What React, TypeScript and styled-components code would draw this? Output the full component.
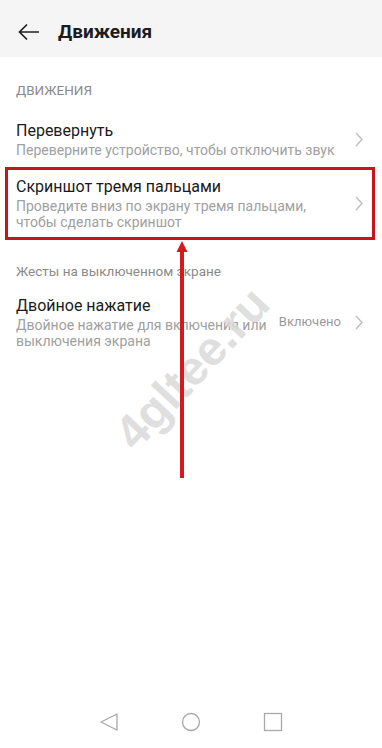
import React from 'react'
import styled, { createGlobalStyle } from 'styled-components'

const GlobalStyle = createGlobalStyle`
  html, body {
    margin: 0;
    padding: 0;
    background: #ffffff;
  }
  body {
    font-family: Roboto, "Noto Sans", "Liberation Sans", sans-serif;
    -webkit-font-smoothing: antialiased;
  }
`

const Screen = styled.div`
  position: relative;
  width: 382px;
  height: 748px;
  display: flex;
  flex-direction: column;
  background: #ffffff;
  overflow: hidden;
`

const Header = styled.header`
  height: 57px;
  display: flex;
  align-items: center;
  padding-left: 17px;
  background: #f5f5f5;
  flex-shrink: 0;
`

const BackButton = styled.button`
  width: 24px;
  height: 24px;
  padding: 0;
  border: 0;
  background: none;
  display: flex;
  align-items: center;
  justify-content: center;
  margin-right: 17px;
  margin-top: 6px;
  color: #222;
`

const Title = styled.h1`
  margin: 0;
  font-size: 19px;
  font-weight: 700;
  color: #1c1c1c;
  margin-top: 6px;
`

const Content = styled.main`
  flex: 1;
`

const SectionLabel = styled.div<{ $top: number; $bottom: number; $caps?: boolean }>`
  padding: ${({ $top, $bottom }) => `${$top}px 16px ${$bottom}px`};
  font-size: 13.5px;
  line-height: 20px;
  color: #8a8a8a;
  text-transform: ${({ $caps }) => ($caps ? 'uppercase' : 'none')};
`

const Row = styled.div<{ $highlight?: boolean }>`
  position: relative;
  display: flex;
  align-items: center;
  padding: ${({ $highlight }) => ($highlight ? '9px 16px 9px' : '7px 16px 8px')};

  ${({ $highlight }) =>
    $highlight &&
    `
    &::after {
      content: '';
      position: absolute;
      top: 0;
      bottom: 0;
      left: 5px;
      right: 7px;
      border: 3.5px solid #c9141c;
      pointer-events: none;
    }
  `}
`

const RowText = styled.div`
  flex: 1;
  min-width: 0;
`

const RowTitle = styled.div`
  font-size: 16px;
  line-height: 22px;
  color: #1a1a1a;
`

const RowSubtitle = styled.div<{ $width?: number }>`
  font-size: 14px;
  line-height: 16.5px;
  color: #a0a0a0;
  max-width: ${({ $width }) => ($width ? `${$width}px` : 'none')};
`

const RowValue = styled.div`
  font-size: 13px;
  color: #9a9a9a;
  margin-right: 14px;
  margin-top: -2px;
`

const Chevron = styled.svg`
  flex-shrink: 0;
  margin-right: 3px;
`

const NavBar = styled.nav`
  height: 48px;
  display: flex;
  align-items: center;
  justify-content: center;
  gap: 60px;
  padding-bottom: 2px;
  flex-shrink: 0;
`

const NavIcon = styled.svg`
  width: 22px;
  height: 22px;
`

const Watermark = styled.div`
  position: absolute;
  left: 192px;
  top: 368px;
  transform: translate(-50%, -50%) rotate(-47deg);
  font-family: "Liberation Sans", Arial, sans-serif;
  font-weight: 700;
  font-size: 48px;
  color: #dadada;
  opacity: 0.85;
  white-space: nowrap;
  pointer-events: none;
`

const Arrow = styled.svg`
  position: absolute;
  left: 175px;
  top: 240px;
  pointer-events: none;
`

function ChevronRight() {
  return (
    <Chevron width="8" height="15" viewBox="0 0 8 15">
      <path d="M1 1 L7 7.5 L1 14" fill="none" stroke="#bdbdbd" strokeWidth="1.4" />
    </Chevron>
  )
}

export default function App() {
  return (
    <>
      <GlobalStyle />
      <Screen>
        <Header>
          <BackButton aria-label="Назад">
            <svg width="22" height="18" viewBox="0 0 22 18">
              <path d="M21 9 H2 M9 1.5 L1.5 9 L9 16.5" fill="none" stroke="#222" strokeWidth="1.7" />
            </svg>
          </BackButton>
          <Title>Движения</Title>
        </Header>

        <Content>
          <SectionLabel $top={23} $bottom={13} $caps>Движения</SectionLabel>

          <Row>
            <RowText>
              <RowTitle>Перевернуть</RowTitle>
              <RowSubtitle>Переверните устройство, чтобы отключить звук</RowSubtitle>
            </RowText>
            <ChevronRight />
          </Row>

          <Row $highlight>
            <RowText>
              <RowTitle>Скриншот тремя пальцами</RowTitle>
              <RowSubtitle $width={300}>Проведите вниз по экрану тремя пальцами, чтобы сделать скриншот</RowSubtitle>
            </RowText>
            <ChevronRight />
          </Row>

          <SectionLabel $top={21} $bottom={7}>Жесты на выключенном экране</SectionLabel>

          <Row>
            <RowText>
              <RowTitle>Двойное нажатие</RowTitle>
              <RowSubtitle $width={262}>Двойное нажатие для включения или выключения экрана</RowSubtitle>
            </RowText>
            <RowValue>Включено</RowValue>
            <ChevronRight />
          </Row>
        </Content>

        <NavBar>
          <NavIcon viewBox="0 0 22 22">
            <path d="M19 3 L3 11 L19 19 Z" fill="none" stroke="#a8a8a8" strokeWidth="1.3" strokeLinejoin="round" />
          </NavIcon>
          <NavIcon viewBox="0 0 22 22">
            <circle cx="11" cy="11" r="8.5" fill="none" stroke="#a8a8a8" strokeWidth="1.3" />
          </NavIcon>
          <NavIcon viewBox="0 0 22 22">
            <rect x="2.5" y="2.5" width="17" height="17" fill="none" stroke="#a8a8a8" strokeWidth="1.3" />
          </NavIcon>
        </NavBar>

        <Watermark>4gltee.ru</Watermark>

        <Arrow width="14" height="242" viewBox="0 0 14 242">
          <path d="M7 10 V238" stroke="#d31a1f" strokeWidth="4" />
          <path d="M7 1 L12.5 12 L1.5 12 Z" fill="#d31a1f" />
        </Arrow>
      </Screen>
    </>
  )
}
